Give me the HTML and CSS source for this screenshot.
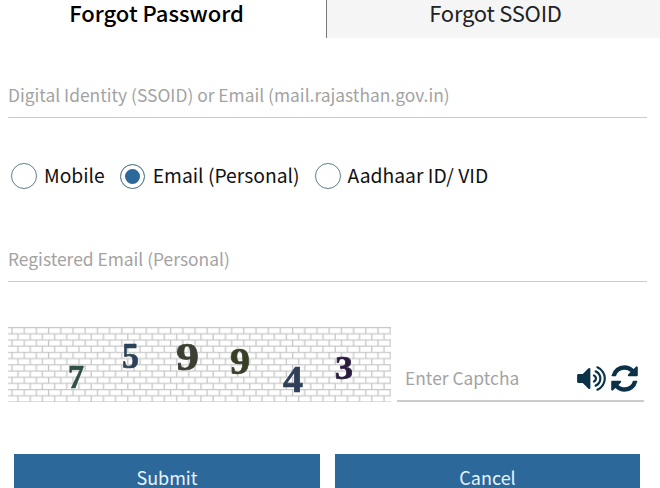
FILE: index.html
```html
<!DOCTYPE html>
<html lang="en">
<head>
    <meta charset="UTF-8">
    <meta name="viewport" content="width=device-width, initial-scale=1.0">
    <title>Forgot Password</title>
    <link rel="stylesheet" href="styles.css">
</head>
<body>
    <div class="tabs">
        <div class="tab tab-active">Forgot Password</div>
        <div class="tab tab-other">Forgot SSOID</div>
    </div>

    <div class="field field-ssoid">Digital Identity (SSOID) or Email (mail.rajasthan.gov.in)</div>

    <div class="radio-row">
        <label class="radio-item"><span class="radio"></span><span class="radio-label">Mobile</span></label>
        <label class="radio-item"><span class="radio radio-on"></span><span class="radio-label">Email (Personal)</span></label>
        <label class="radio-item"><span class="radio"></span><span class="radio-label">Aadhaar ID/ VID</span></label>
    </div>

    <div class="field field-email">Registered Email (Personal)</div>

    <div class="captcha-row">
        <svg class="captcha" viewBox="0 0 383 75" width="383" height="75">
            <defs>
                <pattern id="bricks" width="24.4" height="12.4" patternUnits="userSpaceOnUse">
                    <rect width="24.4" height="12.4" fill="#fff"/>
                    <path d="M0 .6H24.400M0 6.800H24.400M4 0V6.200M16.200 0V6.200M10 6.200V12.400M22.200 6.200V12.400" stroke="#c8c8c8" stroke-width="1.300" fill="none"/>
                </pattern>
            </defs>
            <rect class="wall" width="383" height="75" fill="url(#bricks)"/>
            <g class="digits">
                <text x="60" y="61" font-size="33" fill="#2f5048" stroke="#2f5048" textLength="16" lengthAdjust="spacingAndGlyphs">7</text>
                <text x="114" y="41" font-size="36" fill="#2c4258" stroke="#2c4258" textLength="17" lengthAdjust="spacingAndGlyphs">5</text>
                <text x="168" y="43" font-size="39" fill="#3b4032" stroke="#3b4032" textLength="23" lengthAdjust="spacingAndGlyphs">9</text>
                <text x="222" y="47" font-size="37" fill="#383f26" stroke="#383f26" textLength="20" lengthAdjust="spacingAndGlyphs">9</text>
                <text x="275" y="65" font-size="37" fill="#2f4058" stroke="#2f4058" textLength="20" lengthAdjust="spacingAndGlyphs">4</text>
                <text x="327" y="52" font-size="33" fill="#2a1a3c" stroke="#2a1a3c" textLength="18" lengthAdjust="spacingAndGlyphs">3</text>
            </g>
        </svg>
        <div class="captcha-input">
            <span class="captcha-text">Enter Captcha</span>
            <svg class="icon icon-sound" viewBox="0 0 1792 1792" width="31" height="31">
                <path d="M832 352v1088q0 26-19 45t-45 19-45-19l-333-333h-262q-26 0-45-19t-19-45v-384q0-26 19-45t45-19h262l333-333q19-19 45-19t45 19 19 45zm384 544q0 76-42.500 141.500t-112.500 93.500q-10 5-25 5-26 0-45-18.500t-19-45.500q0-21 12-35.500t29-25 34-23 29-36 12-56.500-12-56.500-29-36-34-23-29-25-12-35.500q0-27 19-45.500t45-18.500q15 0 25 5 70 27 112.500 93t42.500 142zm256 0q0 153-85 282.500t-225 188.500q-13 5-25 5-27 0-46-19t-19-45q0-39 39-59 56-29 76-44 74-54 115.500-135.500t41.500-173.500-41.500-173.500-115.500-135.500q-20-15-76-44-39-20-39-59 0-26 19-45t45-19q13 0 26 5 140 59 225 188.500t85 282.500zm256 0q0 230-127 422.500t-338 283.500q-13 5-26 5-26 0-45-19t-19-45q0-36 39-59 7-4 22.500-10.500t22.500-10.500q46-25 82-51 123-91 192-227t69-289-69-289-192-227q-36-26-82-51-7-4-22.500-10.500t-22.500-10.500q-39-23-39-59 0-26 19-45t45-19q13 0 26 5 211 91 338 283.500t127 422.500z"/>
            </svg>
            <svg class="icon icon-refresh" viewBox="0 0 1792 1792" width="31" height="31">
                <path d="M1639 1056q0 5-1 7-64 268-268 434.500t-478 166.500q-146 0-282.500-55t-243.500-157l-129 129q-19 19-45 19t-45-19-19-45v-448q0-26 19-45t45-19h448q26 0 45 19t19 45-19 45l-137 137q71 66 161 102t187 36q134 0 250-65t186-179q11-17 53-117 8-23 30-23h192q13 0 22.500 9.500t9.500 22.500zm25-800v448q0 26-19 45t-45 19h-448q-26 0-45-19t-19-45 19-45l138-138q-148-137-349-137-134 0-250 65t-186 179q-11 17-53 117-8 23-30 23h-199q-13 0-22.500-9.500t-9.500-22.500v-7q65-268 270-434.500t480-166.500q146 0 284 55.500t245 156.500l130-129q19-19 45-19t45 19 19 45z"/>
            </svg>
        </div>
    </div>

    <div class="buttons">
        <button class="btn btn-submit">Submit</button>
        <button class="btn btn-cancel">Cancel</button>
    </div>
</body>
</html>
```

FILE: styles.css
```css
html, body {
    height: 488px;
    overflow: hidden;
}

body {
    margin: 0;
    background: #fff;
    font-family: "Noto Sans CJK JP", "Noto Sans", sans-serif;
    color: #111;
}

.tabs {
    display: flex;
    height: 38px;
}

.tab {
    flex: 1;
    font-size: 22px;
    line-height: 24px;
    text-align: center;
}

.tab-active {
    flex: 0 0 327px;
    padding-right: 13px;
    background: #fff;
    border-right: 1px solid #777;
    box-sizing: border-box;
    font-weight: 500;
    color: #000;
}

.tab-other {
    padding-left: 4px;
    background: #f5f5f5;
    color: #222;
    letter-spacing: -0.25px;
}

.field {
    width: 639px;
    margin-left: 8px;
    border-bottom: 1px solid #ccc;
    font-size: 17.4px;
    line-height: 24px;
    color: #a3a3a3;
}

.field-ssoid {
    margin-top: 45px;
    padding-bottom: 10px;
}

.radio-row {
    display: flex;
    align-items: center;
    height: 26px;
    margin: 45px 0 0 11px;
    font-size: 19.3px;
    color: #111;
}

.radio-item {
    display: flex;
    align-items: center;
    gap: 7px;
    margin-right: 15px;
}

.radio-label {
    margin-bottom: 2px;
}

.radio {
    width: 24px;
    height: 24px;
    border: 1px solid #5f7f8c;
    border-radius: 50%;
    background: #fff;
}

.radio-on {
    width: 23px;
    height: 23px;
    margin-right: 1px;
    background: #2d689b;
    box-shadow: inset 0 0 0 4px #fff;
}

.field-email {
    margin-top: 58px;
    padding-bottom: 10px;
}

.captcha-row {
    display: flex;
    margin: 45px 0 0 8px;
}

.captcha {
    display: block;
}

.wall {
    filter: blur(0.3px);
}

.digits {
    font-family: "Liberation Serif", serif;
    font-weight: bold;
    stroke-width: 0.7px;
    filter: blur(0.4px);
}

.captcha-input {
    display: flex;
    align-items: center;
    width: 247px;
    height: 50px;
    margin: 25px 0 0 6px;
    padding-top: 4px;
    border-bottom: 2px solid #ccc;
    box-sizing: border-box;
}

.captcha-text {
    margin: 0 0 2px 8px;
    width: 171px;
    font-size: 17.4px;
    color: #a3a3a3;
}

.icon {
    display: block;
    fill: #0b3249;
    flex: none;
}

.icon-refresh {
    margin-left: 2px;
}

.buttons {
    display: flex;
    gap: 15px;
    margin: 52px 0 0 14px;
}

.btn {
    width: 306px;
    height: 50px;
    padding: 0 0 4px;
    border: 0;
    background: #2d689b;
    color: #e8f3fa;
    font-family: inherit;
    font-size: 18px;
    line-height: 24px;
}

.btn-cancel {
    width: 305px;
}
```
